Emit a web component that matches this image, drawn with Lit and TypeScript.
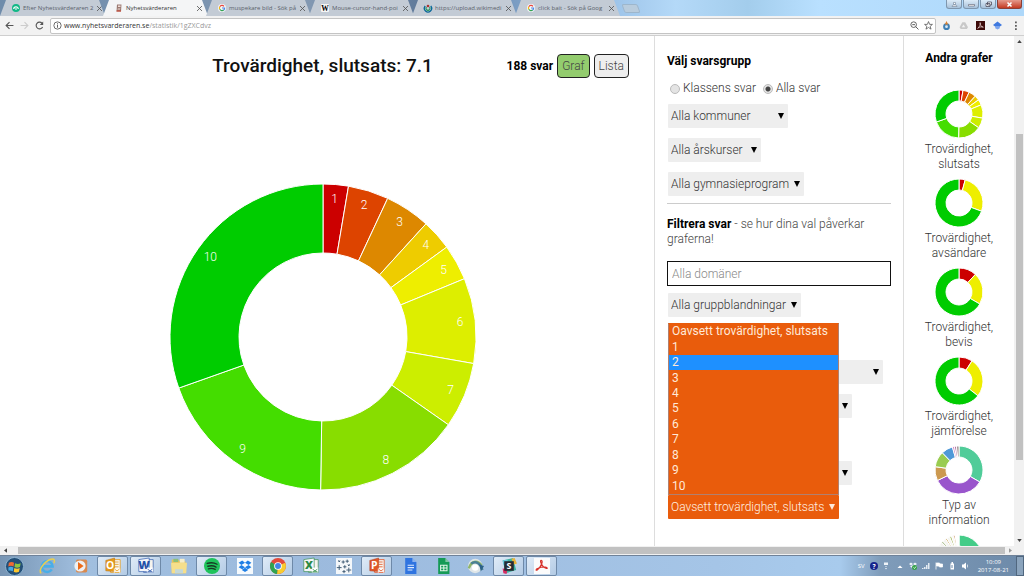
import { LitElement, html, svg, css, nothing } from "lit";
import { customElement, property, state } from "lit/decorators.js";
import { classMap } from "lit/directives/class-map.js";

interface Slice {
  value: number;
  color: string;
  label?: string;
}

const scale = ["#cc0000", "#dd4400", "#dd8800", "#eecc00", "#eeee00", "#ddee00", "#ccee00", "#88dd00", "#44dd00", "#00cc00"];
const conclusion: Slice[] = [9.6, 15.4, 17.3, 11.7, 13.6, 32.4, 25, 55.9, 69.6, 109.5].map((value, i) => ({
  value,
  color: scale[i],
  label: String(i + 1),
}));
const three = (a: number, b: number, c: number): Slice[] => [
  { value: a, color: "#cc0000" },
  { value: b, color: "#eeee00" },
  { value: c, color: "#00cc00" },
];

const graphs: { title: string; slices: Slice[] }[] = [
  { title: "Trovärdighet, slutsats", slices: conclusion },
  { title: "Trovärdighet, avsändare", slices: three(15, 95, 250) },
  { title: "Trovärdighet, bevis", slices: three(43, 77, 240) },
  { title: "Trovärdighet, jämförelse", slices: three(33, 95, 232) },
  {
    title: "Typ av information",
    slices: [
      { value: 120, color: "#50cc99" },
      { value: 124, color: "#9955cc" },
      { value: 34, color: "#cc9950" },
      { value: 38, color: "#99cc50" },
      { value: 28, color: "#5099d8" },
      { value: 5, color: "#cc80bb" },
      { value: 5, color: "#aa6699" },
      { value: 6, color: "#998888" },
    ],
  },
  {
    title: "",
    slices: [
      { value: 90, color: "#44cc88" },
      { value: 215, color: "#9955cc" },
      { value: 8, color: "#f4f4f0" },
      { value: 5, color: "#b8c8a0" },
      { value: 8, color: "#f4f4f0" },
      { value: 4, color: "#ccaa66" },
      { value: 7, color: "#f4f4f0" },
      { value: 5, color: "#aabb66" },
      { value: 5, color: "#f8f4f0" },
      { value: 4, color: "#cc9966" },
      { value: 9, color: "#ffffff" },
    ],
  },
];

@customElement("donut-chart")
class DonutChart extends LitElement {
  @property({ attribute: false }) slices: Slice[] = [];
  @property({ type: Number }) outer = 153;
  @property({ type: Number }) inner = 84;
  @property({ type: Boolean }) labels = false;

  static styles = css`
    :host { display: block; line-height: 0; }
    svg { width: 100%; height: auto; }
    text { font: 300 12px Roboto, sans-serif; fill: #fff; text-anchor: middle; dominant-baseline: central; }
  `;

  render() {
    const total = this.slices.reduce((sum, s) => sum + s.value, 0);
    const R = this.outer;
    const at = (r: number, a: number) => [r * Math.sin(a), -r * Math.cos(a)];
    let angle = 0;
    const parts = this.slices.map((s) => {
      const from = angle;
      const to = (angle += (s.value / total) * Math.PI * 2);
      const big = to - from > Math.PI ? 1 : 0;
      const label = at(R - 15, (from + to) / 2);
      const d = `M${at(R, from)}A${R} ${R} 0 ${big} 1 ${at(R, to)}L${at(this.inner, to)}A${this.inner} ${this.inner} 0 ${big} 0 ${at(this.inner, from)}Z`;
      return svg`<path d=${d} fill=${s.color} stroke="#fff" stroke-width="1"></path>
        ${this.labels ? svg`<text x=${label[0]} y=${label[1]}>${s.label}</text>` : nothing}`;
    });
    return html`<svg viewBox="${-R} ${-R} ${2 * R} ${2 * R}" aria-hidden="true">${parts}</svg>`;
  }
}

const icon = (box: string, body: unknown) => html`<svg class="icon" viewBox=${box} aria-hidden="true">${body}</svg>`;

const google = svg`<circle cx="8" cy="8" r="8" fill="#f5f6f8"/><g fill="none" stroke-width="2.4"><path d="M12 4.6A5.2 5.2 0 0 0 3.6 5.4" stroke="#e8453c"/><path d="M3.6 5.4a5.2 5.2 0 0 0 0 5.2" stroke="#f5b912"/><path d="M3.6 10.6a5.2 5.2 0 0 0 7.8 1.4" stroke="#34a353"/><path d="M11.4 12a5 5 0 0 0 1.8-4H8" stroke="#4a86e8"/></g>`;
const wiki = svg`<rect width="16" height="16" rx="2" fill="#f6f6f6"/><text x="8" y="13" font-family="Liberation Serif, serif" font-size="15" font-weight="700" text-anchor="middle">W</text>`;

const tabs = [
  { title: "Efter Nyhetsvärderaren 2", art: svg`<circle cx="8" cy="8" r="8" fill="#12b886"/><path d="M3.5 10a4.5 4.5 0 0 1 9 0" fill="none" stroke="#fff" stroke-width="2.4"/><path d="M8 7v5" stroke="#fff" stroke-width="2"/>` },
  { title: "Nyhetsvärderaren", active: true, art: svg`<path d="M4 1h9l-1 14H3z" fill="#9b7a72"/><path d="M6 3h5v3H6zM5.500 8h5v1H5.500zM5 11h5v1H5z" fill="#f3dfd8"/><path d="M3 13h9v2H3z" fill="#d0402c"/>` },
  { title: "muspekare bild - Sök på", art: google },
  { title: "Mouse-cursor-hand-poi", art: wiki },
  { title: "https://upload.wikimedi", art: svg`<path d="M2.500 4a7.200 7.200 0 1 0 11 0" fill="none" stroke="#076698" stroke-width="2.600"/><path d="M5 6a4 4 0 1 0 6 0" fill="none" stroke="#2f9966" stroke-width="2.400"/><circle cx="8" cy="4" r="2.600" fill="#a33"/>` },
  { title: "click bait - Sök på Goog", art: google },
] as { title: string; active?: boolean; art: unknown }[];

const fold = (color: string, inner: unknown) => svg`<path d="M4 0h9l5 5v15H4z" fill=${color}/><path d="M13 0v5h5z" fill="#fff" opacity=".45"/>${inner}`;
const office = (color: string, letter: string, dark: string) =>
  svg`<path d="M7 2h12v16H7z" fill="#f7f4ee" stroke=${color}/><path d="M12 5h5M12 8h5M12 11h5" stroke=${color}/><path d="M1 3l11-3v17L1 16z" fill=${color} stroke=${dark} stroke-width=".6"/><text x="6.500" y="14" font-family="Open Sans, sans-serif" font-size="13" font-weight="700" fill="#fff" text-anchor="middle">${letter}</text><path d="M11 13h8v6h-8z" fill="#fff" opacity=".8"/><path d="M12 14l3 2 3-2M12 18h6" stroke=${color} fill="none"/>`;
const officeLight = (color: string, letter: string) =>
  svg`<path d="M7 2h12v16H7z" fill="#f7f4ee" stroke=${color} stroke-width=".8"/><path d="M1 2l13-2v17L1 17z" fill="#f4f6fa" stroke=${color} stroke-width=".8"/><text x="7.500" y="14" font-family="Open Sans, sans-serif" font-size="14" font-weight="800" fill=${color} text-anchor="middle">${letter}</text><path d="M11 12h8v6h-8z" fill="#fff"/><path d="M12 14l3 2 3-2M12 17h6" stroke=${color} fill="none"/>`;

const programs: { name: string; open?: boolean; art: unknown }[] = [
  { name: "Internet Explorer", art: svg`<path d="M16 14.200A6.800 6.800 0 1 1 17 10.500H5.500" fill="none" stroke="#49aee8" stroke-width="3.200"/><path d="M3 19C-2 17 6 4 15 1.500c5-1 5 2 3.500 5" fill="none" stroke="#e8cf52" stroke-width="1.800"/>` },
  { name: "Mediaspelaren", art: svg`<rect x="1" y="2" width="15" height="16" rx="2" fill="#9dbbd8"/><rect x="5" y="2" width="14" height="16" rx="2" fill="#d98a50"/><circle cx="10" cy="10" r="7" fill="#eef0f3"/><path d="M7.500 5v10l7-5z" fill="#ec6b18"/>` },
  { name: "Outlook", open: true, art: office("#e59a1c", "O", "#b86a00") },
  { name: "Word", open: true, art: officeLight("#2351a8", "W") },
  { name: "Utforskaren", art: svg`<path d="M1 2h8l2 2h7v15H1z" fill="#e6c35c"/><path d="M3 1h6v4H3z" fill="#8ec07a"/><path d="M11 1h6v5h-6z" fill="#f6eecb"/><path d="M0 6h20l-1 13H1z" fill="#f6df8b"/><path d="M5 14h10v5H5z" fill="#c4d8d8"/>` },
  { name: "Spotify", open: true, art: svg`<circle cx="10" cy="10" r="10" fill="#1fc35b"/><path d="M4 6.800c4-1.300 8.800-1 12.300 1M4.800 10.300c3.500-1 7.400-.7 10.300 1M5.500 13.500c3-.8 6-.5 8.500.8" fill="none" stroke="#173824" stroke-width="1.700" stroke-linecap="round"/>` },
  { name: "Dropbox", art: svg`<rect width="20" height="20" fill="#f6fafd"/><path d="M6.500 3L2 6l3.500 2.800L10 6zM13.500 3L18 6l-3.500 2.800L10 6zM2 11.500l3.500-2.700L10 11.500 6.500 14zM18 11.500l-3.500-2.700L10 11.500l3.500 2.500zM6 15l4-2.800L14 15l-4 2.500z" fill="#1f7fe5"/>` },
  { name: "Chrome", open: true, art: svg`<circle cx="10" cy="10" r="10" fill="#e14a3c"/><path d="M10 10L1.300 5A10 10 0 0 0 9 20z" fill="#2fa351"/><path d="M10 10l9-4A10 10 0 0 1 9 20z" fill="#f8cd2f"/><circle cx="10" cy="10" r="4.800" fill="#fff"/><circle cx="10" cy="10" r="3.700" fill="#4284e6"/>` },
  { name: "Excel", art: officeLight("#2d8a45", "X") },
  { name: "Stjärnor", art: svg`<rect width="20" height="20" fill="#f4f7fa"/><path d="M3 3l2 2m0-2L3 5M9 3v4M7 5h4M14 2v4m-2-2h4M4 9v6m-3-3h6M11 9v4m-2-2h4M15 8l2 2m0-2l-2 2M10 15v4m-2-2h4M16 12v6m-3-3h6" stroke="#3f5b74" stroke-width="1.200"/>` },
  { name: "PowerPoint", open: true, art: office("#e0562a", "P", "#a93510") },
  { name: "Dokument", art: fold("#2f74e0", svg`<path d="M7 9h8M7 12h8M7 15h6" stroke="#dce9ff" stroke-width="1.400"/>`) },
  { name: "Kalkylark", art: fold("#159a56", svg`<path d="M7 9h8v7H7zM7 12.500h8M11 9v7" stroke="#e2f6e9" stroke-width="1.300" fill="none"/>`) },
  { name: "AnyConnect", art: svg`<circle cx="9" cy="10" r="9" fill="#dfe6e8"/><path d="M1 13C4 4 11 2 17 9" fill="none" stroke="#8fb56a" stroke-width="3"/><path d="M4 7c6-4 12 0 14 8" fill="none" stroke="#4a7f96" stroke-width="3"/><circle cx="9" cy="12" r="4" fill="#fff"/><path d="M14 8l6 2-4 7z" fill="#2c6287"/>` },
  { name: "Slack", open: true, art: svg`<path d="M2 3l13-3 4 15-13 4z" fill="#3db39e"/><path d="M2 3l6-1 1 4-6 2z" fill="#67c8dc"/><path d="M13 1l4-1 3 7-4 1z" fill="#e8b23a"/><path d="M2 13l6 1-1 6-4-1z" fill="#d82c62"/><rect x="4" y="4" width="12" height="12" fill="#252b33"/><text x="10" y="14" font-family="Open Sans, sans-serif" font-size="11" font-weight="700" fill="#fff" text-anchor="middle">S</text>` },
  { name: "Adobe Reader", open: true, art: svg`<rect width="20" height="20" fill="#fbfbfb"/><path d="M9 3c3 0 0 8-5 12-2 1-2-1 1-2 4-2 9-2 11-1 2 2-2 1-4-1-3-3-5-8-3-8z" fill="none" stroke="#d7322b" stroke-width="1.500"/>` },
];

interface Choice {
  name: string;
  text: string;
  size: string;
}

const audience: Choice[] = [
  { name: "Kommun", text: "Alla kommuner", size: "w-120" },
  { name: "Årskurs", text: "Alla årskurser", size: "w-93" },
  { name: "Program", text: "Alla gymnasieprogram", size: "w-136" },
];

@customElement("app-root")
class AppRoot extends LitElement {
  @state() private view = "Graf";
  @state() private scope = "Alla svar";
  @state() private active = 2;

  static styles = css`
    :host { display: flex; flex-direction: column; height: 100vh; overflow: hidden; background: #fff; color: #333; font: 300 12px/15px Roboto, sans-serif; }
    * { box-sizing: border-box; }
    button { font: inherit; color: inherit; padding: 0; border: 0; background: none; }
    .icon { display: block; flex: none; overflow: visible; }

    .strip { display: flex; justify-content: space-between; height: 16px; background: linear-gradient(90deg, #6f8cab 0, #8298b2 30%, #5d7899 42%, #8fb6df 56%, #b4d9f8 66%, #a3cdec 73%, #b9e0ff 80%, #aed8fa 100%); }
    .tabs { display: flex; min-width: 0; }
    .tab { display: flex; align-items: center; gap: 3px; width: 105px; height: 16px; padding: 0 6px 0 12px; margin-right: -2px; font: 400 6px/8px "Open Sans", sans-serif; color: #59616b; background: #c3cbd5; clip-path: polygon(6px 0, calc(100% - 6px) 0, 100% 100%, 0 100%); }
    .tab.active { background: #f4f5f6; color: #333; }
    .tab .icon { width: 8px; height: 8px; }
    .name { flex: 1; white-space: nowrap; text-align: left; }
    .tab .cross { width: 5px; height: 5px; }
    .plus { width: 16px; height: 9px; margin: 4px 0 0 5px; background: #b9ccdd; border: 1px solid #9db6cc; border-radius: 2px; transform: skewX(20deg); }
    .win { display: flex; gap: 1px; padding-right: 2px; }
    .win button { display: grid; place-items: center; width: 16px; height: 9px; border: 1px solid #7f96ad; border-top: 0; border-radius: 0 0 3px 3px; background: linear-gradient(#dcebf8, #a9c2da); }
    .win .close { width: 25px; background: linear-gradient(#e59a8c, #c43a22); border-color: #8a4038; }
    .win .icon { width: 7px; height: 5px; }

    .bar { display: flex; align-items: center; gap: 6px; height: 20px; flex: none; padding: 0 5px; background: #f2f2f2; border-bottom: 1px solid #cfcfcf; }
    .bar .icon { width: 9px; height: 9px; }
    .address { flex: 1; display: flex; align-items: center; gap: 2px; min-width: 0; height: 16px; padding: 0 2px; border: 1px solid #c4c4c4; border-radius: 2px; background: #fff; }
    .url { flex: 1; min-width: 0; font: 400 7px/9px "Open Sans", sans-serif; color: #999; white-space: nowrap; }
    .url b { font-weight: 400; color: #333; }
    .tools, .marks { display: flex; align-items: center; gap: 8px; }
    .marks { gap: 5px; }

    .page { flex: 1; min-height: 0; display: grid; grid-template-columns: minmax(0, 1fr) 250px 110px 10px; }
    main { padding: 18px 25px 0 16px; overflow: hidden; }
    .head { display: grid; grid-template-columns: 1fr auto 1fr; align-items: center; height: 24px; }
    h1 { grid-column: 2; margin: 0; font: 500 19px/24px Roboto, sans-serif; color: #111; }
    .count { justify-self: end; display: flex; align-items: center; gap: 4px; white-space: nowrap; }
    .strong, h2 { margin: 0; font: 700 12px/15px Roboto, sans-serif; color: #000; }
    .toggle { height: 24px; padding: 0 4px; border: 1px solid #222; border-radius: 4px; background: #eee; color: #444; }
    .toggle.on { background: #93cc6e; }
    .big { width: 306px; max-width: 100%; margin: 106px auto 0; }

    .filters { padding: 18px 12px 0; border-left: 1px solid #ddd; border-right: 1px solid #ddd; }
    .radios { display: flex; gap: 7px; margin: 12px 0 8px 3px; }
    .radios label { display: flex; align-items: center; gap: 3px; }
    input[type="radio"] { appearance: none; width: 10px; height: 10px; margin: 0; border: 1px solid #bbb; border-radius: 50%; background: #e4e4e4; }
    input[type="radio"]:checked { background: radial-gradient(#444 0 2px, #e4e4e4 3px); }
    .stack { display: flex; flex-direction: column; align-items: flex-start; gap: 10px; margin-left: 1px; }
    .stack + .stack { margin-top: 43px; }
    select { appearance: none; display: block; height: 24px; padding: 0 3px; margin: 0; border: 0; border-radius: 1px; font: inherit; color: #333; background: #eee url("data:image/svg+xml,%3Csvg xmlns='http://www.w3.org/2000/svg' width='6' height='6'%3E%3Cpath d='M0 0h6L3 6z'/%3E%3C/svg%3E") no-repeat right 4px center; }
    .w-93 { width: 93px; }
    .w-120 { width: 120px; }
    .w-133 { width: 133px; }
    .w-136 { width: 136px; }
    .w-184 { width: 184px; }
    .w-215 { width: 215px; }
    .rule { height: 1px; margin: 7px 0 13px; border: 0; background: #ccc; }
    .lead { margin: 0 0 14px; color: #444; }
    .domain { display: block; width: 100%; height: 25px; margin-bottom: 7px; padding: 0 4px; border: 1px solid #111; border-radius: 0; font: inherit; }
    .domain::placeholder { color: #888; opacity: 1; }
    .open { position: relative; width: 171px; }
    .open select { width: 100%; color: #fff0e2; background-color: #e95c0c; background-image: url("data:image/svg+xml,%3Csvg xmlns='http://www.w3.org/2000/svg' width='6' height='6'%3E%3Cpath fill='%23ffe9d8' d='M0 0h6L3 6z'/%3E%3C/svg%3E"); }
    .menu { position: absolute; left: 0; right: 0; bottom: 100%; height: 172px; display: grid; grid-auto-rows: 1fr; margin: 0; padding: 0; list-style: none; font-weight: 400; background: #e95c0c; color: #ffe9d8; border: 1px solid #b08070; border-top-color: #e95c0c; }
    .menu li { display: flex; align-items: center; padding: 0 3px; white-space: nowrap; }
    .menu .hit { background: #1e90ff; }

    .others { min-height: 0; overflow: hidden; padding-top: 15px; text-align: center; }
    .others h2 { margin-bottom: 24px; }
    .list { display: flex; flex-direction: column; align-items: center; gap: 7px; }
    .graph { display: flex; flex-direction: column; align-items: center; gap: 4px; width: 80px; color: #333; text-decoration: none; }
    .small { width: 48px; }

    .vbar { display: flex; flex-direction: column; align-items: center; justify-content: space-between; background: #f1f1f1; padding: 4px 0; }
    .vthumb { flex: 0 0 65%; width: 7px; background: #c1c1c1; margin-top: 12px; }
    .arrow { width: 5px; height: 3px; }
    .hbar { display: flex; align-items: center; gap: 4px; height: 9px; flex: none; padding: 0 12px 0 4px; background: #f1f1f1; }
    .hbar .arrow { width: 3px; height: 5px; }
    .hthumb { flex: 1; height: 7px; margin-left: 7px; background: #c1c1c1; }

    .taskbar { display: flex; align-items: center; height: 21px; flex: none; border-top: 1px solid #6f8299; background: linear-gradient(90deg, #7795b4 0, #a1bfdf 8%, #9cbadd 30%, #a5c5e7 70%, #a8cbed 82%, #7f9cba 86%, #6d8aa9 100%); }
    .start { display: grid; place-items: center; width: 28px; }
    .start .icon { width: 19px; height: 19px; }
    .programs { display: flex; gap: 2px; margin-left: 3px; flex: 1; }
    .program { display: grid; place-items: center; width: 31px; height: 20px; border: 1px solid transparent; border-radius: 2px; }
    .program.running { border-color: #6e89a8; background: linear-gradient(135deg, #dfebf7, #b3cbe5); }
    .program .icon { width: 16px; height: 16px; }
    .tray { display: flex; align-items: center; gap: 5px; color: #fff; font: 400 6px/8px "Open Sans", sans-serif; }
    .tray .icon { width: 8px; height: 8px; }
    .clock { text-align: center; margin: 0 2px 0 4px; }
    .desk { width: 8px; height: 20px; border: 1px solid #50677f; background: #8ba4bd; }
  `;

  private dropdown(c: Choice) {
    return html`<select class=${c.size} aria-label=${c.name}><option>${c.text}</option></select>`;
  }

  private cross() {
    return html`<svg class="icon cross" viewBox="0 0 6 6" aria-hidden="true"><path d="M0 0l6 6M6 0L0 6" stroke="#555"></path></svg>`;
  }

  private chrome() {
    return html`
      <div class="strip">
        <div class="tabs">
          ${tabs.map((t) => html`<button class=${classMap({ tab: true, active: !!t.active })}>${icon("0 0 16 16", t.art)}<span class="name">${t.title}</span>${this.cross()}</button>`)}
          <button class="plus" aria-label="Ny flik"></button>
        </div>
        <div class="win">
          <button aria-label="Användare">${icon("0 0 14 10", svg`<path d="M2 9c0-3 3-3 5-3s5 0 5 3zM5 1h4v4H5z" fill="#fff" stroke="#5c6f84"/>`)}</button>
          <button aria-label="Minimera">${icon("0 0 14 10", svg`<path d="M1 5h12v3H1z" fill="#fff" stroke="#445"/>`)}</button>
          <button aria-label="Återställ">${icon("0 0 14 10", svg`<path d="M5 0h8v6H5zM2 3h8v6H2z" fill="#fff" stroke="#445" stroke-width="1.500"/>`)}</button>
          <button class="close" aria-label="Stäng">${icon("0 0 14 10", svg`<path d="M3 1l8 8M11 1L3 9" stroke="#fff" stroke-width="3"/>`)}</button>
        </div>
      </div>
      <div class="bar">
        <button aria-label="Bakåt">${icon("0 0 16 16", svg`<path d="M15 8H2m6-6L2 8l6 6" fill="none" stroke="#555" stroke-width="2"/>`)}</button>
        <button aria-label="Framåt">${icon("0 0 16 16", svg`<path d="M1 8h13M8 2l6 6-6 6" fill="none" stroke="#ccc" stroke-width="2"/>`)}</button>
        <button aria-label="Ladda om">${icon("0 0 16 16", svg`<path d="M13.500 10.500A6 6 0 1 1 12.500 4" fill="none" stroke="#555" stroke-width="2"/><path d="M14.500 1v6h-6z" fill="#555"/>`)}</button>
        <div class="address">
          ${icon("0 0 16 16", svg`<circle cx="8" cy="8" r="6.500" fill="none" stroke="#555" stroke-width="1.500"/><path d="M8 7v5M8 4v2" stroke="#555" stroke-width="1.600"/>`)}
          <span class="url"><b>www.nyhetsvarderaren.se</b>/statistik/1gZXCdvz</span>
          <div class="marks">
            ${icon("0 0 16 16", svg`<circle cx="6.500" cy="6.500" r="5" fill="none" stroke="#555" stroke-width="1.600"/><path d="M10 10l5 5M4 6.500h5" stroke="#555" stroke-width="1.700"/>`)}
            ${icon("0 0 16 16", svg`<path d="M8 1l2 5h5l-4 3.500 1.500 5L8 11.500 3.500 14.500 5 9.500 1 6h5z" fill="none" stroke="#555" stroke-width="1.400"/>`)}
          </div>
        </div>
        <div class="tools">
          ${icon("0 0 16 16", svg`<circle cx="8" cy="10" r="6" fill="#3f7fb4"/><path d="M8 0l3 6H5z" fill="#e0802a"/><circle cx="8" cy="10" r="2.500" fill="#dbe9f4"/>`)}
          ${icon("0 0 16 16", svg`<path d="M6 2h5l5 9-2 3H3l-2-3z" fill="#c8c8c8"/><path d="M8 6l3 5H5z" fill="#f2f2f2"/>`)}
          ${icon("0 0 16 16", svg`<rect width="16" height="16" fill="#3c0a08"/><path d="M7 3c3 0-1 8-4 10 3-3 8-3 10-2-3 0-7-5-6-8z" fill="none" stroke="#f0dada" stroke-width="1.300"/>`)}
          ${icon("0 0 16 16", svg`<path d="M8 1l8 6-8 6-8-6z" fill="#3f79df"/><path d="M4 9h8v4l-4 2-4-2z" fill="#7aa4ee"/>`)}
          <button aria-label="Meny">${icon("0 0 16 16", svg`<path d="M9 1h3v3H9zM9 7h3v3H9zM9 13h3v3H9z" fill="#555"/>`)}</button>
        </div>
      </div>`;
  }

  render() {
    return html`
      ${this.chrome()}
      <div class="page">
        <main>
          <div class="head">
            <h1>Trovärdighet, slutsats: 7.1</h1>
            <div class="count">
              <span class="strong">188 svar</span>
              ${["Graf", "Lista"].map((v) => html`<button class=${classMap({ toggle: true, on: this.view === v })} @click=${() => (this.view = v)}>${v}</button>`)}
            </div>
          </div>
          <donut-chart class="big" labels .slices=${conclusion}></donut-chart>
        </main>
        <section class="filters">
          <h2>Välj svarsgrupp</h2>
          <div class="radios">
            ${["Klassens svar", "Alla svar"].map((v) => html`<label><input type="radio" name="scope" .checked=${this.scope === v} @change=${() => (this.scope = v)} />${v}</label>`)}
          </div>
          <div class="stack">${audience.map((c) => this.dropdown(c))}</div>
          <hr class="rule" />
          <p class="lead"><span class="strong">Filtrera svar</span> - se hur dina val påverkar graferna!</p>
          <input class="domain" type="text" placeholder="Alla domäner" aria-label="Domän" />
          <div class="stack">${this.dropdown({ name: "Gruppblandning", text: "Alla gruppblandningar", size: "w-133" })}</div>
          <div class="stack">
            ${this.dropdown({ name: "Information", text: "", size: "w-215" })}
            ${this.dropdown({ name: "Avsändare", text: "", size: "w-184" })}
          </div>
          <div class="stack">
            ${this.dropdown({ name: "Jämförelse", text: "", size: "w-184" })}
            <div class="open">
              <select aria-label="Slutsats"><option>Oavsett trovärdighet, slutsats</option></select>
              <ul class="menu" role="listbox" aria-label="Slutsats">
                ${Array.from({ length: 11 }, (_, i) => html`<li role="option" aria-selected=${this.active === i} class=${classMap({ hit: this.active === i })} @mouseenter=${() => (this.active = i)}>${i || "Oavsett trovärdighet, slutsats"}</li>`)}
              </ul>
            </div>
          </div>
        </section>
        <aside class="others">
          <h2>Andra grafer</h2>
          <div class="list">
            ${graphs.map((g) => html`<a class="graph" href="#"><donut-chart class="small" outer="24" inner="13" .slices=${g.slices}></donut-chart>${g.title}</a>`)}
          </div>
        </aside>
        <div class="vbar">
          <svg class="icon arrow" viewBox="0 0 6 4" aria-hidden="true"><path d="M0 4l3-4 3 4z" fill="#444"></path></svg>
          <div class="vthumb"></div>
          <svg class="icon arrow" viewBox="0 0 6 4" aria-hidden="true"><path d="M0 0l3 4 3-4z" fill="#444"></path></svg>
        </div>
      </div>
      <div class="hbar">
        <svg class="icon arrow" viewBox="0 0 4 6" aria-hidden="true"><path d="M4 0L0 3l4 3z" fill="#444"></path></svg>
        <div class="hthumb"></div>
        <svg class="icon arrow" viewBox="0 0 4 6" aria-hidden="true"><path d="M0 0l4 3-4 3z" fill="#999"></path></svg>
      </div>
      <div class="taskbar">
        <button class="start" aria-label="Start">
          ${icon("0 0 20 20", svg`<circle cx="10" cy="10" r="9.500" fill="#245078" stroke="#8fb5d3"/><path d="M4 6c2-1 4-1 5.500 0L9 10c-2-1-3.500-1-5.500 0z" fill="#ee6a35"/><path d="M10.500 6.500c2 1 4 1 6 0l-.8 4c-2 1-4 1-5.700 0z" fill="#8ec63f"/><path d="M3.500 11c2-1 3.500-1 5.300 0l-.6 4c-1.700-1-3.500-1-4.500-.5z" fill="#48a8e2"/><path d="M9.800 11.500c2 1 4 1 5.700 0l-.8 4c-2 1-4 1-5.500 0z" fill="#fcc62d"/>`)}
        </button>
        <div class="programs">
          ${programs.map((p) => html`<button class=${classMap({ program: true, running: !!p.open })} aria-label=${p.name}>${icon("0 0 20 20", p.art)}</button>`)}
        </div>
        <div class="tray">
          <span>SV</span>
          ${icon("0 0 16 16", svg`<circle cx="8" cy="8" r="8" fill="#15248c"/><text x="8" y="13" font-size="13" font-weight="700" fill="#fff" text-anchor="middle">?</text>`)}
          ${icon("0 0 16 16", svg`<path d="M2 1h8v5H2zM4 9h4v1H4zM4 12h4l-2 3z" fill="#eef3f8"/>`)}
          ${icon("0 0 16 16", svg`<path d="M3 12l5-5 5 5z" fill="#fff"/>`)}
          ${icon("0 0 16 16", svg`<path d="M4 1L0 4l4 3 4-3 4 3 4-3-4-3-4 3zM2 9l6 4 6-4-6-3z" fill="#eef3f8"/><circle cx="11" cy="11" r="5" fill="#36a34a"/><path d="M9 11l2 2 3-4" stroke="#fff" stroke-width="1.500" fill="none"/>`)}
          ${icon("0 0 16 16", svg`<path d="M0 12h3v2H0zM4 10h3v4H4zM8 6h3v8H8zM12 2h3v12h-3z" fill="#e4ebf2"/>`)}
          ${icon("0 0 16 16", svg`<path d="M2 1v14M3 2h6l1 2h5v6H9L8 8H3z" stroke="#fff" stroke-width="1.500" fill="#fff"/>`)}
          ${icon("0 0 16 16", svg`<path d="M5 3h2V0h3v3h2v12H5z" fill="#fff"/><path d="M7 6h2v6H7z" fill="#6d8aa9"/>`)}
          ${icon("0 0 16 16", svg`<path d="M2 5h3l5-4v14l-5-4H2zM12 4c2 2 2 6 0 8" fill="#fff"/>`)}
          <div class="clock">10:09<br />2017-08-21</div>
          <div class="desk"></div>
        </div>
      </div>`;
  }
}
